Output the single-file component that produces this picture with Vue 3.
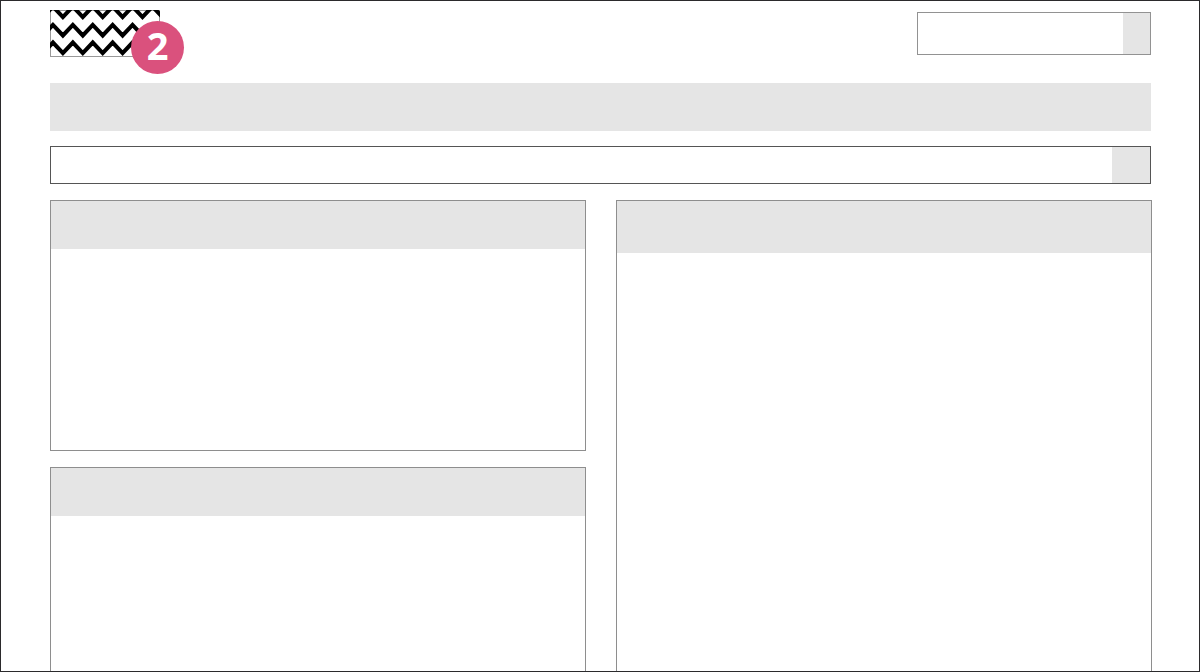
<template>
  <div class="page">
    <header class="top">
      <a href="#" class="brand" aria-label="Home">
        <svg class="logo" viewBox="0 0 110 47" aria-hidden="true">
          <rect x="0.5" y="0.5" width="109" height="46" fill="none" stroke="#999" />
          <polyline
            v-for="y in rows"
            :key="y"
            :points="zigzag(y)"
            fill="none"
            stroke="#000"
            stroke-width="4.1"
          />
        </svg>
        <span class="badge">2</span>
      </a>
      <form class="field field-small" @submit.prevent>
        <input v-model="quick" type="text" aria-label="Search" />
        <button type="submit" aria-label="Search"></button>
      </form>
    </header>
    <nav class="menu"></nav>
    <form class="field field-wide" @submit.prevent>
      <input v-model="query" type="text" aria-label="Search content" />
      <button type="submit" aria-label="Search content"></button>
    </form>
    <main class="columns">
      <div class="column">
        <section class="panel panel-short">
          <div class="panel-head"></div>
        </section>
        <section class="panel panel-fill">
          <div class="panel-head"></div>
        </section>
      </div>
      <div class="column">
        <section class="panel panel-fill">
          <div class="panel-head panel-head-tall"></div>
        </section>
      </div>
    </main>
  </div>
</template>

<script setup>
import { ref } from "vue";

const quick = ref("");
const query = ref("");

// y of the peaks of each chevron row
const rows = [-3.5, 14.9, 32.5];

const zigzag = (top) => {
  const points = [];
  for (let i = 0; i < 14; i++) {
    points.push(`${-7 + i * 9.95},${i % 2 ? top : top + 10.6}`);
  }
  return points.join(" ");
};
</script>

<style>
body {
  margin: 0;
}
</style>

<style scoped>
.page {
  display: flex;
  flex-direction: column;
  box-sizing: border-box;
  height: 100vh;
  padding: 9px 47px 0 49px;
  border: 1px solid #2b2a2c;
  background: #fff;
  font-family: "Open Sans", sans-serif;
  overflow: hidden;
}
.top {
  display: flex;
  justify-content: space-between;
  height: 73px;
  margin-right: 1px;
}
.brand {
  position: relative;
  width: 110px;
  height: 47px;
  text-decoration: none;
}
.logo {
  display: block;
  width: 110px;
  height: 47px;
}
.badge {
  position: absolute;
  top: 11px;
  left: 81px;
  width: 53px;
  height: 53px;
  border-radius: 50%;
  background: #da517d;
  color: #fff;
  font-size: 38px;
  font-weight: 700;
  line-height: 48px;
  text-align: center;
}
.field {
  display: flex;
  box-sizing: border-box;
  border: 1px solid #929292;
}
.field input {
  flex: 1;
  min-width: 0;
  padding: 0 10px;
  border: 0;
  outline: 0;
  background: #fff;
  font: inherit;
}
.field button {
  padding: 0;
  border: 0;
  background: #e5e5e5;
}
.field-small {
  width: 234px;
  height: 43px;
  margin-top: 2px;
}
.field-small button {
  width: 27px;
}
.field-wide {
  flex-shrink: 0;
  height: 38px;
  margin: 15px 1px 16px 0;
  border-color: #555;
}
.field-wide button {
  width: 38px;
}
.menu {
  flex-shrink: 0;
  height: 48px;
  margin-right: 1px;
  background: #e5e5e5;
}
.columns {
  display: grid;
  flex: 1;
  grid-template-columns: 1fr 1fr;
  gap: 30px;
}
.column {
  display: flex;
  flex-direction: column;
  gap: 16px;
}
.panel {
  box-sizing: border-box;
  border: 1px solid #8e8e8e;
}
.panel-short {
  height: 251px;
}
.panel-fill {
  flex: 1;
  border-bottom: 0;
}
.panel-head {
  height: 48px;
  background: #e5e5e5;
}
.panel-head-tall {
  height: 52px;
}
</style>
